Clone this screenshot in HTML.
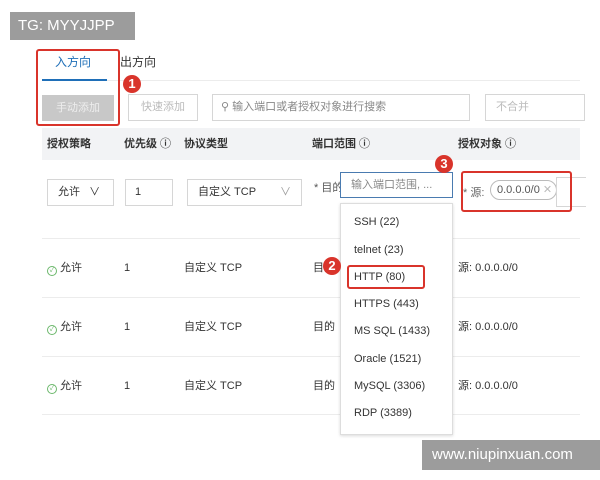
<!DOCTYPE html>
<html><head><meta charset="utf-8"><style>
*{margin:0;padding:0;box-sizing:border-box}
body{width:600px;height:480px;background:#fff;position:relative;overflow:hidden;font-family:"Liberation Sans","Noto Sans CJK SC",sans-serif;font-size:11px;color:#333}
.a{position:absolute;line-height:14px}
.box{position:absolute;border:1px solid #d6d6d6;background:#fff}
.red{position:absolute;border:2px solid #d9342b;border-radius:3px}
.num{position:absolute;width:18px;height:18px;border-radius:50%;background:#d9342b;color:#fff;font-weight:bold;font-size:13px;text-align:center;line-height:18px}
.line{position:absolute;left:42px;width:538px;height:1px;background:#ececec}
.ok{display:inline-block;width:10px;height:10px;border:1px solid #6cb86c;border-radius:50%;margin-right:3px;vertical-align:-1px;font-size:7px;color:#6cb86c;text-align:center;line-height:8px}
</style></head><body>
<div class="a" style="left:10px;top:12px;width:125px;height:28px;background:#9c9c9c;color:#fff;font-size:15px;line-height:28px;padding-left:8px">TG: MYYJJPP</div>

<div class="a" style="left:55px;top:55px;font-size:12px;color:#1f6fb8">入方向</div>
<div class="a" style="left:120px;top:55px;font-size:12px">出方向</div>
<div class="a" style="left:42px;top:79px;width:65px;height:2px;background:#1f6fb8"></div>
<div class="line" style="top:80px;left:107px;width:473px"></div>

<div class="a" style="left:42px;top:95px;width:72px;height:26px;background:#c8c8c8;color:#eee;text-align:center;line-height:26px">手动添加</div>
<div class="box" style="left:128px;top:94px;width:70px;height:27px;color:#bbb;text-align:center;line-height:25px">快速添加</div>
<div class="box" style="left:212px;top:94px;width:258px;height:27px;color:#888;line-height:25px;padding-left:8px">⚲ 输入端口或者授权对象进行搜索</div>
<div class="box" style="left:485px;top:94px;width:100px;height:27px;color:#bbb;line-height:25px;padding-left:10px">不合并</div>

<div class="a" style="left:42px;top:128px;width:538px;height:32px;background:#f2f3f5"></div>
<div class="a" style="left:47px;top:137px;font-weight:bold">授权策略</div>
<div class="a" style="left:124px;top:137px;font-weight:bold">优先级 ⓘ</div>
<div class="a" style="left:184px;top:137px;font-weight:bold">协议类型</div>
<div class="a" style="left:312px;top:137px;font-weight:bold">端口范围 ⓘ</div>
<div class="a" style="left:458px;top:137px;font-weight:bold">授权对象 ⓘ</div>

<div class="box" style="left:47px;top:179px;width:67px;height:27px;line-height:25px;padding-left:10px">允许 &nbsp;&nbsp;∨</div>
<div class="box" style="left:125px;top:179px;width:48px;height:27px;line-height:25px;padding-left:9px">1</div>
<div class="box" style="left:187px;top:179px;width:115px;height:27px;line-height:25px;padding-left:10px">自定义 TCP<span style="position:absolute;right:10px;color:#999">∨</span></div>
<div class="a" style="left:314px;top:181px;color:#555">* 目的</div>
<div class="box" style="left:340px;top:172px;width:113px;height:26px;border-color:#4a7bb0;color:#888;line-height:24px;padding-left:10px">输入端口范围, ...</div>
<div class="a" style="left:463px;top:186px;color:#666">* 源:</div>
<div class="a" style="left:490px;top:180px;width:67px;height:20px;border:1px solid #bbb;border-radius:10px;line-height:18px;padding-left:6px;color:#555">0.0.0.0/0 <span style="color:#bbb">✕</span></div>
<div class="box" style="left:556px;top:177px;width:30px;height:30px;border-right:none"></div>

<div class="line" style="top:238px"></div>
<div class="line" style="top:297px"></div>
<div class="line" style="top:356px"></div>
<div class="line" style="top:414px"></div>

<div class="a" style="left:47px;top:261px"><span class="ok">✓</span>允许</div>
<div class="a" style="left:124px;top:261px">1</div>
<div class="a" style="left:184px;top:261px">自定义 TCP</div>
<div class="a" style="left:313px;top:261px">目的</div>
<div class="a" style="left:458px;top:261px">源: 0.0.0.0/0</div>
<div class="a" style="left:47px;top:320px"><span class="ok">✓</span>允许</div>
<div class="a" style="left:124px;top:320px">1</div>
<div class="a" style="left:184px;top:320px">自定义 TCP</div>
<div class="a" style="left:313px;top:320px">目的</div>
<div class="a" style="left:458px;top:320px">源: 0.0.0.0/0</div>
<div class="a" style="left:47px;top:379px"><span class="ok">✓</span>允许</div>
<div class="a" style="left:124px;top:379px">1</div>
<div class="a" style="left:184px;top:379px">自定义 TCP</div>
<div class="a" style="left:313px;top:379px">目的</div>
<div class="a" style="left:458px;top:379px">源: 0.0.0.0/0</div>

<div class="a" style="left:340px;top:203px;width:113px;height:232px;background:#fff;border:1px solid #ddd;box-shadow:0 1px 3px rgba(0,0,0,.15)"></div>
<div class="a" style="left:354px;top:215px">SSH (22)</div>
<div class="a" style="left:354px;top:243px">telnet (23)</div>
<div class="a" style="left:354px;top:270px">HTTP (80)</div>
<div class="a" style="left:354px;top:297px">HTTPS (443)</div>
<div class="a" style="left:354px;top:324px">MS SQL (1433)</div>
<div class="a" style="left:354px;top:352px">Oracle (1521)</div>
<div class="a" style="left:354px;top:379px">MySQL (3306)</div>
<div class="a" style="left:354px;top:406px">RDP (3389)</div>

<div class="red" style="left:36px;top:49px;width:84px;height:77px"></div>
<div class="num" style="left:123px;top:75px">1</div>
<div class="red" style="left:347px;top:265px;width:78px;height:24px"></div>
<div class="num" style="left:323px;top:257px">2</div>
<div class="red" style="left:461px;top:171px;width:111px;height:41px"></div>
<div class="num" style="left:435px;top:155px">3</div>

<div class="a" style="left:422px;top:440px;width:178px;height:30px;background:#9c9c9c;color:#fff;font-size:15px;line-height:30px;padding-left:10px">www.niupinxuan.com</div>
</body></html>
